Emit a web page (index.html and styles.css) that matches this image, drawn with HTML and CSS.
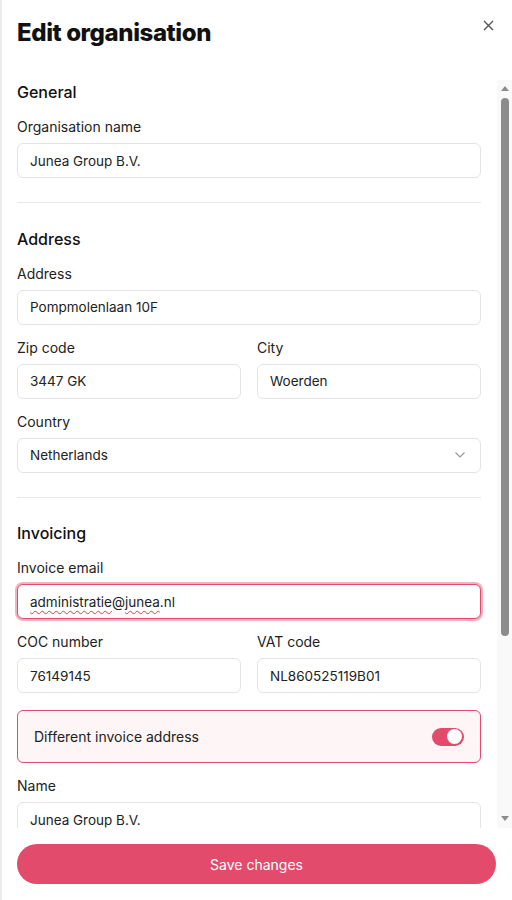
FILE: index.html
```
<!DOCTYPE html>
<html lang="en">
<head>
  <meta charset="UTF-8">
  <title>Edit organisation</title>
  <link rel="stylesheet" href="styles.css">
</head>
<body>
  <div class="panel">
    <div class="panel-header">
      <h1>Edit organisation</h1>
      <button class="close-btn" aria-label="Close">
        <svg width="11" height="11" viewBox="0 0 11 11"><path d="M1 1L10 10M10 1L1 10" stroke="#555" stroke-width="1.4" fill="none"/></svg>
      </button>
    </div>

    <div class="body-wrap">
      <div class="panel-body">
        <section class="section">
          <h3>General</h3>
          <div class="field">
            <label>Organisation name</label>
            <input type="text" value="Junea Group B.V.">
          </div>
        </section>

        <hr>

        <section class="section">
          <h3>Address</h3>
          <div class="field">
            <label>Address</label>
            <input type="text" value="Pompmolenlaan 10F">
          </div>
          <div class="row">
            <div class="field">
              <label>Zip code</label>
              <input type="text" value="3447 GK">
            </div>
            <div class="field">
              <label>City</label>
              <input type="text" value="Woerden">
            </div>
          </div>
          <div class="field">
            <label>Country</label>
            <div class="select">
              <span>Netherlands</span>
              <svg width="12" height="8" viewBox="0 0 12 8"><path d="M1.5 1.5L6 6L10.5 1.5" stroke="#999" stroke-width="1.2" fill="none"/></svg>
            </div>
          </div>
        </section>

        <hr>

        <section class="section">
          <h3>Invoicing</h3>
          <div class="field">
            <label>Invoice email</label>
            <div class="input focused"><span class="spell">administratie</span>@<span class="spell">junea</span>.nl</div>
          </div>
          <div class="row">
            <div class="field">
              <label>COC number</label>
              <input type="text" value="76149145">
            </div>
            <div class="field">
              <label>VAT code</label>
              <input type="text" value="NL860525119B01">
            </div>
          </div>
          <div class="toggle-card">
            <span>Different invoice address</span>
            <span class="switch"><span class="knob"></span></span>
          </div>
          <div class="field">
            <label>Name</label>
            <input type="text" value="Junea Group B.V.">
          </div>
        </section>
      </div>

      <div class="scrollbar">
        <span class="arrow up"></span>
        <div class="track">
          <div class="thumb" style="height: 538px;"></div>
        </div>
        <span class="arrow down"></span>
      </div>
    </div>

    <div class="panel-footer">
      <button class="save-btn">Save changes</button>
    </div>
  </div>
</body>
</html>
```
FILE: styles.css
```
html, body {
  margin: 0;
  height: 100%;
}

body {
  font-family: Inter, "Noto Sans", sans-serif;
  color: #1a1a1a;
  background: #fff;
}

.panel {
  height: 900px;
  display: flex;
  flex-direction: column;
  border-left: 2px solid #ececec;
  box-sizing: border-box;
}

.panel-header {
  display: flex;
  justify-content: space-between;
  align-items: flex-start;
  padding: 18px 18px 0 15px;
  height: 80px;
  box-sizing: border-box;
  flex-shrink: 0;
}

.panel-header h1 {
  margin: 0;
  font-size: 24px;
  font-weight: 800;
  letter-spacing: -0.4px;
  color: #111;
}

.close-btn {
  border: none;
  background: none;
  padding: 0;
  margin-top: 1px;
  cursor: pointer;
}

.body-wrap {
  flex: 1;
  min-height: 0;
  display: flex;
}

.panel-body {
  flex: 1;
  min-width: 0;
  overflow: hidden;
  padding: 0 16px 0 15px;
}

/* fake scrollbar (screenshots hide the native one) */
.scrollbar {
  width: 15px;
  flex-shrink: 0;
  background: #f9f9f9;
  display: flex;
  flex-direction: column;
  align-items: center;
}

.arrow {
  width: 0;
  height: 0;
  border-left: 4px solid transparent;
  border-right: 4px solid transparent;
}

.arrow.up {
  border-bottom: 5px solid #8c8c8c;
  margin: 6px 0 5px;
}

.arrow.down {
  border-top: 5px solid #8c8c8c;
  margin: 5px 0 7px;
}

.track {
  flex: 1;
  width: 100%;
  display: flex;
  justify-content: center;
  padding-top: 2px;
}

.thumb {
  width: 8px;
  border-radius: 4px;
  background: #8c8c8c;
}

.section h3 {
  margin: 2px 0 16px;
  font-size: 16px;
  font-weight: 500;
  color: #111;
}

hr {
  border: none;
  border-top: 1px solid #e8e8e8;
  margin: 24px 0 25.5px;
}

.field {
  display: flex;
  flex-direction: column;
  margin-bottom: 14px;
  min-width: 0;
}

.field:last-child {
  margin-bottom: 0;
}

.field label {
  font-size: 14px;
  color: #222;
  margin-bottom: 7px;
  line-height: 18px;
}

input[type="text"],
.select,
.input {
  font-family: inherit;
  font-size: 13.5px;
  color: #222;
  width: 100%;
  min-width: 0;
  height: 35px;
  flex-shrink: 0;
  box-sizing: border-box;
  border: 1px solid #e4e4e4;
  border-radius: 6px;
  padding: 0 12px;
  background: #fff;
  outline: none;
}

.select {
  display: flex;
  align-items: center;
  justify-content: space-between;
  padding-right: 14px;
}

.input {
  display: flex;
  align-items: center;
  white-space: pre;
}

.input.focused {
  border-color: #e24b6c;
  box-shadow: 0 0 0 2px #f3b2c0;
}

.spell {
  text-decoration: underline wavy #e04040;
  text-decoration-thickness: 1px;
  text-underline-offset: 3px;
}

.row {
  display: grid;
  grid-template-columns: 1fr 1fr;
  gap: 16px;
  margin-bottom: 14px;
}

.row .field {
  margin-bottom: 0;
}

.toggle-card {
  display: flex;
  justify-content: space-between;
  align-items: center;
  height: 53px;
  box-sizing: border-box;
  padding: 0 16px;
  border: 1px solid #e24b6c;
  border-radius: 6px;
  background: #fef5f6;
  font-size: 14px;
  color: #222;
  margin: 17px 0 14px;
}

.switch {
  width: 32px;
  height: 18px;
  border-radius: 9px;
  background: #e24b6c;
  display: flex;
  align-items: center;
  justify-content: flex-end;
  padding: 0 2px;
  box-sizing: border-box;
}

.knob {
  width: 15px;
  height: 15px;
  border-radius: 50%;
  background: #fff;
}

.panel-footer {
  flex-shrink: 0;
  padding: 16px 16px 16px 15px;
}

.save-btn {
  width: 100%;
  height: 40px;
  border: none;
  border-radius: 20px;
  background: #e24b6c;
  color: #fff;
  font-family: inherit;
  font-size: 14px;
  cursor: pointer;
}
```
